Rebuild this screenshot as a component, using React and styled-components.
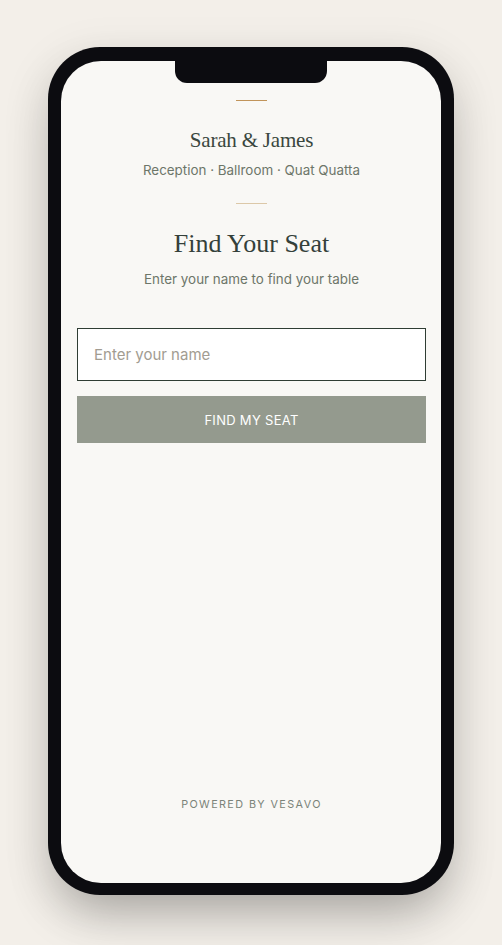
import styled, { createGlobalStyle } from "styled-components";

const GlobalStyle = createGlobalStyle`
  * {
    box-sizing: border-box;
  }
  html,
  body {
    margin: 0;
    padding: 0;
    background: #f3efe9;
  }
`;

const Page = styled.div`
  display: flex;
  justify-content: center;
  align-items: flex-start;
  min-height: 100vh;
  padding-top: 47px;
`;

const Phone = styled.div`
  width: 406px;
  height: 848px;
  padding: 14px 13px 12px 13px;
  background: #0c0c10;
  border-radius: 52px;
  box-shadow: 0 25px 50px -12px rgba(0, 0, 0, 0.3),
    0 12px 40px 14px rgba(0, 0, 0, 0.05);
`;

const Screen = styled.div`
  position: relative;
  display: flex;
  flex-direction: column;
  height: 100%;
  padding: 39px 15px 71px 16px;
  background: #f9f8f5;
  border-radius: 40px;
  overflow: hidden;
`;

const Notch = styled.div`
  position: absolute;
  top: 0;
  left: 50%;
  transform: translateX(-50%);
  width: 152px;
  height: 22px;
  background: #0c0c10;
  border-radius: 0 0 12px 12px;
`;

const Divider = styled.div`
  align-self: center;
  width: 31px;
  height: 1px;
  background: ${(p) => (p.$faint ? "#dcc8a8" : "#c1945a")};
  flex-shrink: 0;
`;

const Couple = styled.h1`
  margin: 26px 0 0;
  font-family: "Liberation Serif", serif;
  font-weight: 400;
  font-size: 21px;
  line-height: 26px;
  text-align: center;
  color: #3a473e;
  letter-spacing: -0.2px;
`;

const Venue = styled.p`
  margin: 8px 0 24px;
  font-family: Inter, sans-serif;
  font-size: 13.4px;
  line-height: 18px;
  text-align: center;
  color: #6d7669;
`;

const Title = styled.h2`
  margin: 24px 0 0;
  font-family: "Liberation Serif", serif;
  font-weight: 400;
  font-size: 26px;
  line-height: 32px;
  text-align: center;
  color: #34403a;
`;

const Lead = styled.p`
  margin: 10px 0 0;
  font-family: Inter, sans-serif;
  font-size: 13.4px;
  line-height: 18px;
  text-align: center;
  color: #6d7669;
`;

const Form = styled.form`
  display: flex;
  flex-direction: column;
  gap: 15px;
  margin-top: 40px;
`;

const NameInput = styled.input`
  width: 100%;
  height: 53px;
  padding: 0 16px;
  border: 1px solid #2f3d33;
  border-radius: 0;
  background: #ffffff;
  font-family: Inter, sans-serif;
  font-size: 15px;
  color: #2f3b33;
  outline: none;

  &::placeholder {
    color: #a29c91;
  }
`;

const SubmitButton = styled.button`
  width: 100%;
  height: 47px;
  border: none;
  border-radius: 0;
  background: #949a8e;
  color: #ffffff;
  font-family: Inter, sans-serif;
  font-size: 13px;
  letter-spacing: 0.3px;
  text-transform: uppercase;
  cursor: pointer;
`;

const Footer = styled.p`
  margin: auto 0 0;
  font-family: Inter, sans-serif;
  font-size: 10.8px;
  line-height: 14px;
  letter-spacing: 1.4px;
  text-align: center;
  text-transform: uppercase;
  color: #7b8379;
`;

export default function App() {
  const handleSubmit = (event) => {
    event.preventDefault();
  };

  return (
    <>
      <GlobalStyle />
      <Page>
        <Phone>
          <Screen>
            <Notch />
            <Divider />
            <Couple>Sarah &amp; James</Couple>
            <Venue>Reception · Ballroom · Quat Quatta</Venue>
            <Divider $faint />
            <Title>Find Your Seat</Title>
            <Lead>Enter your name to find your table</Lead>
            <Form onSubmit={handleSubmit}>
              <NameInput type="text" placeholder="Enter your name" />
              <SubmitButton type="submit">Find my seat</SubmitButton>
            </Form>
            <Footer>Powered by Vesavo</Footer>
          </Screen>
        </Phone>
      </Page>
    </>
  );
}
